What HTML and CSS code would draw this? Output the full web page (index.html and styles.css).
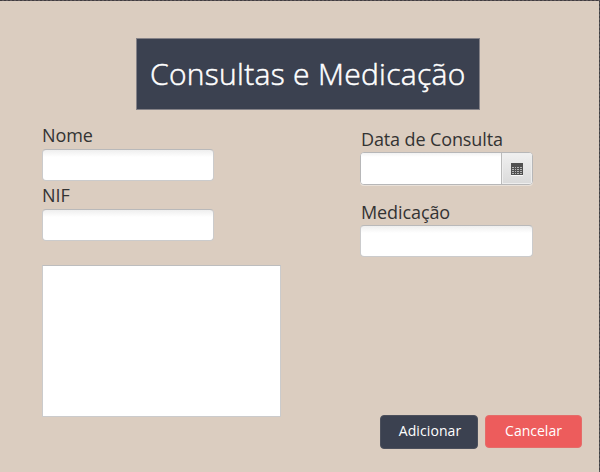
FILE: index.html
```html
<!DOCTYPE html>
<html lang="pt">
<head>
<meta charset="utf-8">
<title>Consultas e Medicação</title>
<link rel="stylesheet" href="styles.css">
</head>
<body>
<main class="window">
  <h1 class="title"><span>Consultas e Medicação</span></h1>
  <form class="form">
    <div class="column">
      <label class="label nome" for="nome"><span>Nome</span></label>
      <input class="field" id="nome" type="text">
      <label class="label nif" for="nif"><span>NIF</span></label>
      <input class="field" id="nif" type="text">
      <textarea class="notes"></textarea>
    </div>
    <div class="column right">
      <label class="label data" for="data"><span>Data de Consulta</span></label>
      <div class="date">
        <input class="date-input" id="data" type="text">
        <button class="date-button" type="button">
          <svg width="12" height="14" viewBox="0 0 12 14" shape-rendering="crispEdges">
            <path fill="#fafafa" d="M0 13h12v1H0z"/>
            <path fill="#505050" d="M0 1h12v12H0z"/>
            <path fill="#b4b4b4" d="M1 5h2v1H1zM4 5h1v1H4zM6 5h2v1H6zM9 5h2v1H9zM1 7h2v1H1zM4 7h1v1H4zM6 7h2v1H6zM9 7h2v1H9zM1 9h2v1H1zM4 9h1v1H4zM6 9h2v1H6zM9 9h2v1H9zM1 11h2v1H1zM4 11h1v1H4zM6 11h2v1H6zM9 11h2v1H9z"/>
          </svg>
        </button>
      </div>
      <label class="label med" for="med"><span>Medicação</span></label>
      <input class="field wide" id="med" type="text">
      <div class="actions">
        <button class="button add" type="button">Adicionar</button>
        <button class="button cancel" type="button">Cancelar</button>
      </div>
    </div>
  </form>
</main>
</body>
</html>
```
FILE: styles.css
```css
* { box-sizing: border-box; }
body { margin: 0; font-family: "Open Sans", "Noto Sans", sans-serif; }
.window {
  width: 600px;
  height: 472px;
  overflow: hidden;
  background:
    repeating-linear-gradient(90deg, #3f3b3f 0 2px, #5c5558 2px 4px) top / 100% 1px no-repeat,
    repeating-linear-gradient(#3f3f43 0 2px, #58585a 2px 4px) right / 1px 100% no-repeat,
    #dbcdc0;
  padding-top: 38px;
}
.title {
  width: 344px;
  height: 72px;
  margin: 0 0 0 136px;
  border: 1px solid #858287;
  background: #3b4150;
  color: #fff;
  font-size: 30px;
  font-weight: 300;
  line-height: 69px;
  padding-left: 13px;
  white-space: nowrap;
  letter-spacing: 0.3px;
  -webkit-text-stroke: 0.5px #fff;
}
.form { display: flex; padding-left: 42px; }
.column { width: 239px; display: flex; flex-direction: column; }
.right { margin-left: 79px; width: 223px; }
.label {
  display: block;
  color: #333;
  font-size: 18px;
  line-height: 26px;
  white-space: nowrap;
}
.nome { height: 27px; margin-top: 12px; letter-spacing: -0.1px; }
.nif { height: 27px; margin-top: 1px; }
.data { height: 26px; margin-top: 16px; padding-left: 1px; letter-spacing: -0.12px; }
.med { height: 26px; margin-top: 14px; padding-left: 1px; letter-spacing: -0.1px; }
.field {
  width: 172px;
  height: 32px;
  margin: 0;
  padding: 0 8px;
  border: 1px solid #cbcbcc;
  border-top-color: #b9b9ba;
  border-radius: 4px;
  background: linear-gradient(#eee 0, #fff 7px);
  outline: 0;
}
.wide { width: 173px; }
.notes {
  width: 239px;
  height: 152px;
  margin: 24px 0 0;
  border: 1px solid #cbcbcc;
  border-top-color: #bdbdbe;
  background: #fff;
  resize: none;
  outline: 0;
}
.date {
  width: 173px;
  height: 33px;
  display: flex;
  overflow: hidden;
  border: 1px solid #b7b7b8;
  border-radius: 4px;
  background: #fff;
  box-shadow: 0 1px 0 #e9e1d9;
}
.date-input {
  flex: 1;
  min-width: 0;
  border: 0;
  background: linear-gradient(#f2f2f2 0, #fff 4px);
  outline: 0;
}
.date-button {
  width: 31px;
  display: flex;
  align-items: center;
  justify-content: center;
  padding: 0;
  border: 0;
  border-left: 1px solid #bababa;
  background: linear-gradient(#f0f0f0, #dadada);
  box-shadow: inset 0 0 0 1px #eee;
}
.actions { display: flex; align-items: flex-start; gap: 7px; margin: 158px 0 0 20px; }
.button {
  padding: 0 0 2px;
  border: 1px solid #857f82;
  border-radius: 4px;
  color: #fff;
  font: 14px/30px "Open Sans", sans-serif;
}
.add { width: 98px; height: 34px; background: #3b4150; border-color: #4c505c; padding-left: 2px; letter-spacing: 0.1px; }
.cancel { width: 97px; height: 33px; background: #ed5c5c; border-color: #e56c69; }
```
